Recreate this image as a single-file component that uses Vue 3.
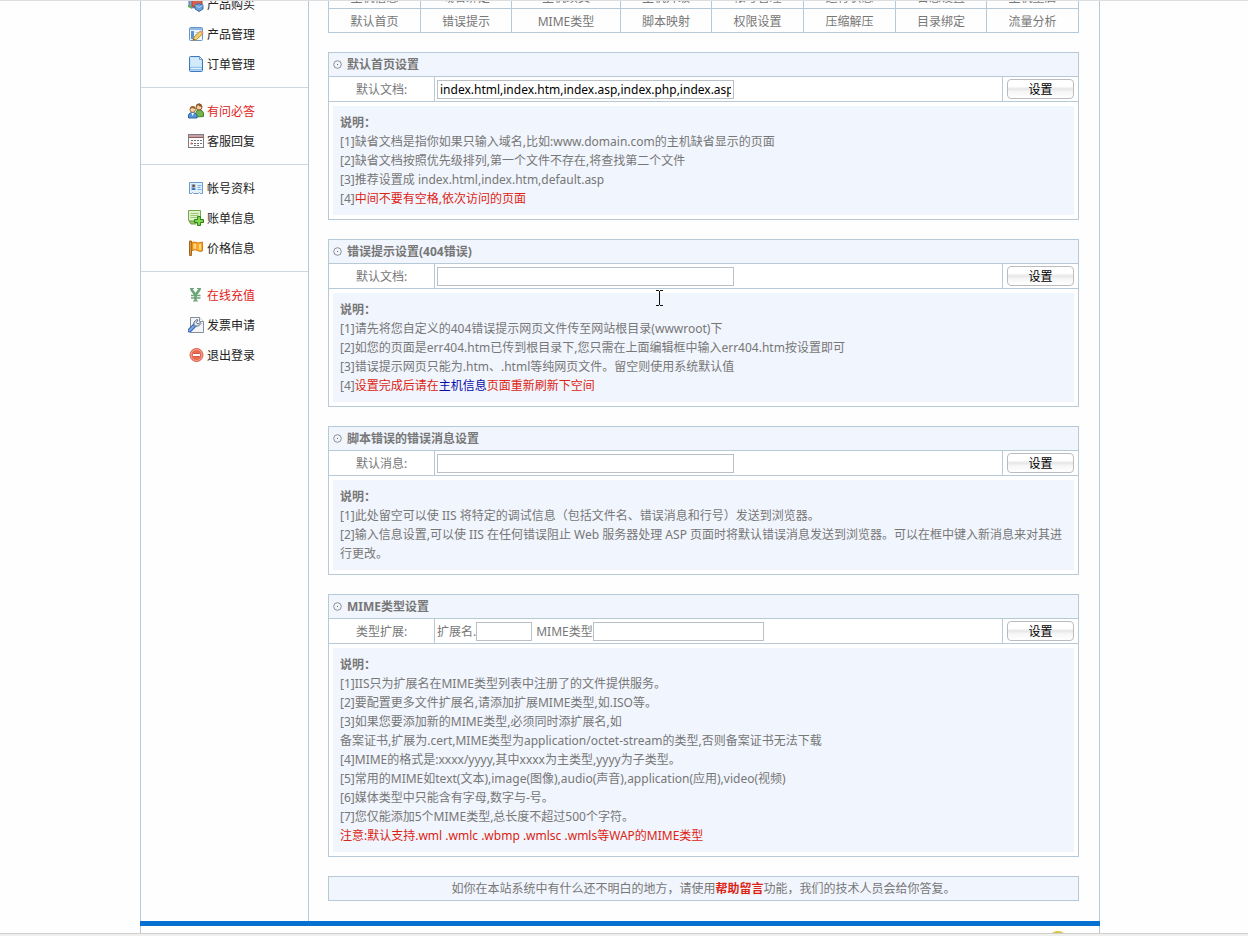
<script setup>
import { ref } from 'vue'

const menu = [
  [
    { label: '产品购买', icon: 'blocks' },
    { label: '产品管理', icon: 'edit' },
    { label: '订单管理', icon: 'page' },
  ],
  [
    { label: '有问必答', icon: 'users', hot: true },
    { label: '客服回复', icon: 'calendar' },
  ],
  [
    { label: '帐号资料', icon: 'card' },
    { label: '账单信息', icon: 'bill' },
    { label: '价格信息', icon: 'flag' },
  ],
  [
    { label: '在线充值', icon: 'yen', hot: true },
    { label: '发票申请', icon: 'wrench' },
    { label: '退出登录', icon: 'exit' },
  ],
]

const tabs = [
  '主机信息', '域名绑定', '主机续费', '主机升级', '帐号管理', '运行状态', '日志设置', '主机重启',
  '默认首页', '错误提示', 'MIME类型', '脚本映射', '权限设置', '压缩解压', '目录绑定', '流量分析',
]

const sections = ref([
  {
    id: 'index',
    title: '默认首页设置',
    label: '默认文档:',
    value: 'index.html,index.htm,index.asp,index.php,index.aspx',
    notes: [
      [{ t: '[1]缺省文档是指你如果只输入域名,比如:www.domain.com的主机缺省显示的页面' }],
      [{ t: '[2]缺省文档按照优先级排列,第一个文件不存在,将查找第二个文件' }],
      [{ t: '[3]推荐设置成 index.html,index.htm,default.asp' }],
      [{ t: '[4]' }, { t: '中间不要有空格,依次访问的页面', c: 'red' }],
    ],
  },
  {
    id: 'error',
    title: '错误提示设置(404错误)',
    label: '默认文档:',
    value: '',
    notes: [
      [{ t: '[1]请先将您自定义的404错误提示网页文件传至网站根目录(wwwroot)下' }],
      [{ t: '[2]如您的页面是err404.htm已传到根目录下,您只需在上面编辑框中输入err404.htm按设置即可' }],
      [{ t: '[3]错误提示网页只能为.htm、.html等纯网页文件。留空则使用系统默认值' }],
      [{ t: '[4]' }, { t: '设置完成后请在', c: 'red' }, { t: '主机信息', c: 'blue', link: true }, { t: '页面重新刷新下空间', c: 'red' }],
    ],
  },
  {
    id: 'script',
    title: '脚本错误的错误消息设置',
    label: '默认消息:',
    value: '',
    notes: [
      [{ t: '[1]此处留空可以使 IIS 将特定的调试信息（包括文件名、错误消息和行号）发送到浏览器。' }],
      [{ t: '[2]输入信息设置,可以使 IIS 在任何错误阻止 Web 服务器处理 ASP 页面时将默认错误消息发送到浏览器。可以在框中键入新消息来对其进行更改。' }],
    ],
  },
  {
    id: 'mime',
    title: 'MIME类型设置',
    label: '类型扩展:',
    mime: true,
    ext: '',
    value: '',
    notes: [
      [{ t: '[1]IIS只为扩展名在MIME类型列表中注册了的文件提供服务。' }],
      [{ t: '[2]要配置更多文件扩展名,请添加扩展MIME类型,如.ISO等。' }],
      [{ t: '[3]如果您要添加新的MIME类型,必须同时添扩展名,如' }],
      [{ t: '备案证书,扩展为.cert,MIME类型为application/octet-stream的类型,否则备案证书无法下载' }],
      [{ t: '[4]MIME的格式是:xxxx/yyyy,其中xxxx为主类型,yyyy为子类型。' }],
      [{ t: '[5]常用的MIME如text(文本),image(图像),audio(声音),application(应用),video(视频)' }],
      [{ t: '[6]媒体类型中只能含有字母,数字与-号。' }],
      [{ t: '[7]您仅能添加5个MIME类型,总长度不超过500个字符。' }],
      [{ t: '注意:默认支持.wml .wmlc .wbmp .wmlsc .wmls等WAP的MIME类型', c: 'red' }],
    ],
  },
])
</script>

<template>
  <div class="window">
    <div class="viewport">
      <div class="page">
        <div class="columns">
          <nav class="sidebar">
            <ul v-for="(group, g) in menu" :key="g" class="group">
              <li v-for="item in group" :key="item.label">
                <a href="#" class="item" :class="{ hot: item.hot }">
                  <svg class="icon" viewBox="0 0 16 16" aria-hidden="true">
                    <g v-if="item.icon === 'blocks'">
                      <path d="M1 5l4-2 4 2v5l-4 2-4-2z" fill="#7fa9d8" stroke="#4d79ac" />
                      <path d="M0 9l4 1v3l-4-2z" fill="#63ad55" />
                      <path d="M4 4l5-3 5 3v6l-5 2-5-2z" fill="#d9604c" stroke="#b23c2c" />
                      <path d="M7 9l4-1.500 4 1.500v4l-4 2.500-4-2.500z" fill="#6c9ed8" stroke="#3f6da8" />
                      <path d="M7.500 9.500l3.500 2 3.500-2" fill="none" stroke="#b5d2f2" />
                    </g>
                    <g v-else-if="item.icon === 'edit'">
                      <rect x="1.500" y="1.500" width="13" height="13" rx="1" fill="#eef5fc" stroke="#6a94c4" />
                      <rect x="2" y="2" width="12" height="2" fill="#8db8e8" />
                      <rect x="3" y="5" width="3" height="8" fill="#5e93d2" />
                      <path d="M7.500 6.500h5M7.500 8.500h4" stroke="#b9cbe0" />
                      <path d="M5 14.500l1-3.500 6.500-6 2.500 2.500-6.500 6z" fill="#f2cf6c" stroke="#b98e35" />
                      <path d="M12 5.500l1-1 2.500 2-1.500 1.500z" fill="#d99a80" />
                      <path d="M5 14.500l.5-2 1.500 1.300z" fill="#4d4a42" />
                    </g>
                    <g v-else-if="item.icon === 'page'">
                      <path d="M1.500 1.500q0-1 1-1h9l3 3v11q0 1-1 1h-11q-1 0-1-1z" fill="#c5e2fa" stroke="#3f7ab8" />
                      <path d="M3 2h8v2h2v6H3z" fill="#d3eafc" />
                      <path d="M11.500 1v2.500H14" fill="#fff" stroke="#6ba0d2" />
                      <path d="M2 11h12v3.500H2z" fill="#94c5ee" />
                      <path d="M3 12.500h10" stroke="#e1f0fc" />
                    </g>
                    <g v-else-if="item.icon === 'users'">
                      <path d="M8 14V9.500Q8 7 11 7q4 0 4.500 3v3.500z" fill="#75b34e" stroke="#47852c" />
                      <circle cx="11" cy="4" r="3" fill="#f2cc9e" stroke="#8e5c2d" />
                      <path d="M8 4Q8 .5 11 .5T14 4q-3-.5-4-2-.5 1.500-2 2z" fill="#8b5828" />
                      <path d="M.5 15v-3Q1 9.500 4.500 9.500T9 12v3z" fill="#5796da" stroke="#2f66aa" />
                      <path d="M3.500 10l1 3 1.500-3z" fill="#fff" />
                      <circle cx="4.700" cy="6.500" r="2.800" fill="#f6d5aa" stroke="#a2733c" />
                      <path d="M2 6q0-3 2.800-3T7.500 6q-3-.3-3.500-1.200Q3.500 6 2 6z" fill="#9a6830" />
                    </g>
                    <g v-else-if="item.icon === 'calendar'">
                      <rect x=".5" y="1.500" width="15" height="13" fill="#fff" stroke="#7c7c82" />
                      <rect x="1" y="2" width="14" height="3" fill="#c9a3a4" />
                      <path d="M1 4.500h14" stroke="#8e5c60" />
                      <path d="M3 7.500h2m1 0h2m1 0h2m1 0h2M3 10.500h2m1 0h2m1 0h2m1 0h2M6 12.500h2m1 0h2" stroke="#6b6e72" />
                      <path d="M2.500 9.500h2v2h-2z" fill="#d1645f" />
                    </g>
                    <g v-else-if="item.icon === 'card'">
                      <path d="M1.500 2.500h13v11h-2l-1-1-1 1h-5l-1-1-1 1h-2z" fill="#e3f1fd" stroke="#6e9cca" />
                      <rect x="3" y="4" width="5" height="6" fill="#b6d4f0" />
                      <circle cx="5.500" cy="5.800" r="1.500" fill="#765a44" />
                      <path d="M3.500 10q0-2.500 2-2.500t2 2.500z" fill="#4679ac" />
                      <path d="M9.500 5.500h4M9.500 7.500h3M9.500 9.500h4" stroke="#79aad9" />
                    </g>
                    <g v-else-if="item.icon === 'bill'">
                      <path d="M.5.500h12v12H3l-2.500-2z" fill="#e0f0cb" stroke="#77a847" />
                      <path d="M2.500 3.500h8M2.500 5.500h8M2.500 7.500h7" stroke="#9cc675" />
                      <path d="M1 11h7v3H3z" fill="#9dc672" stroke="#669b38" />
                      <path d="M9.500 6.500h3v3h3v3h-3v3h-3v-3h-3v-3h3z" fill="#6fce3c" stroke="#2f8517" />
                      <path d="M11 8v6M8 11h6" stroke="#8fe05c" />
                    </g>
                    <g v-else-if="item.icon === 'flag'">
                      <path d="M1.500 1v14.500h2V1z" fill="#d5953c" stroke="#a8651c" />
                      <path d="M4 2.500q2-1 4 0t6.500-.5v9q-3 1-5-.5t-5.500 0z" fill="#f9a82c" stroke="#d67c13" />
                      <path d="M5.500 4q1.500-.5 2.500 0v5q-1-.5-2.500 0zM11 4h2v6h-2z" fill="#fdd680" />
                    </g>
                    <g v-else-if="item.icon === 'yen'" fill="none" stroke="#6ca478">
                      <path d="M3 2l4.500 6L12 2M7.500 7.500V14" stroke-width="2.600" />
                      <path d="M2 1.500h4M9 1.500h4M5 14h5" />
                      <path d="M3 8.500h9.500M3 11h9.500" stroke-width="1.500" />
                    </g>
                    <g v-else-if="item.icon === 'wrench'">
                      <path d="M2.500.5h9l4 4v11h-13z" fill="#f3f5f9" stroke="#868d9c" />
                      <path d="M11.500.5v4h4" fill="#fff" stroke="#868d9c" />
                      <path d="M1.500 13.500L7 8" fill="none" stroke="#2f63ae" stroke-width="4" stroke-linecap="round" />
                      <path d="M1.500 13.500L7 8" fill="none" stroke="#7eaaea" stroke-width="2" stroke-linecap="round" />
                      <path d="M6 9V5l3-2.500 1 .5-1.500 2.500 1.500 1.500 2.500-1.500.5 1L10.500 9z" fill="#dfe6ef" stroke="#5c6f8d" />
                    </g>
                    <g v-else>
                      <circle cx="8.500" cy="8" r="6.500" fill="#ec6a52" stroke="#d9604e" />
                      <circle cx="8.500" cy="8" r="5.500" fill="none" stroke="#f6a592" />
                      <rect x="4.500" y="6.500" width="8" height="3" rx="1" fill="#fff" stroke="#d45744" />
                    </g>
                  </svg>
                  <span>{{ item.label }}</span>
                </a>
              </li>
            </ul>
          </nav>

          <main class="main">
            <nav class="tabs">
              <a v-for="tab in tabs" :key="tab" href="#">{{ tab }}</a>
            </nav>

            <form v-for="s in sections" :key="s.id" class="section" @submit.prevent>
              <h2 class="title">
                <svg class="bullet" viewBox="0 0 9 9" aria-hidden="true">
                  <circle cx="4.500" cy="4.500" r="3.800" fill="none" stroke="#777" stroke-width=".8" />
                  <rect x="4" y="4" width="1" height="1" fill="#666" />
                </svg>
                {{ s.title }}
              </h2>
              <div class="row">
                <label class="label" :for="s.id">{{ s.label }}</label>
                <div class="field">
                  <template v-if="s.mime">
                    <label for="ext">扩展名.</label>
                    <input id="ext" v-model="s.ext" class="short" type="text">
                    <label :for="s.id" class="second">MIME类型</label>
                    <input :id="s.id" v-model="s.value" class="medium" type="text">
                  </template>
                  <input v-else :id="s.id" v-model="s.value" class="long" type="text">
                </div>
                <div class="action"><button type="submit">设置</button></div>
              </div>
              <div class="notes">
                <strong>说明：</strong>
                <p v-for="(line, n) in s.notes" :key="n">
                  <component :is="part.link ? 'a' : 'span'" v-for="(part, p) in line" :key="p" :href="part.link ? '#' : null" :class="part.c">{{ part.t }}</component>
                </p>
              </div>
            </form>

            <p class="help">如你在本站系统中有什么还不明白的地方，请使用<a href="#">帮助留言</a>功能，我们的技术人员会给你答复。</p>
          </main>
        </div>
        <footer class="footer">
          <svg class="badge" viewBox="0 0 20 20" aria-hidden="true">
            <circle cx="10" cy="10" r="10" fill="#d9c53c" />
            <circle cx="10" cy="10" r="6" fill="#f1e27c" />
          </svg>
        </footer>
      </div>
    </div>
    <svg class="cursor" viewBox="0 0 7 16" aria-hidden="true">
      <path d="M0 .5h3M4 .5h3M3.500 1v14M0 15.500h3M4 15.500h3" fill="none" stroke="#111" />
    </svg>
  </div>
</template>

<style>
body {
  margin: 0;
  background: #fefefe;
}
</style>

<style scoped>
.window {
  position: relative;
  box-sizing: border-box;
  height: 100vh;
  display: flex;
  flex-direction: column;
  overflow: hidden;
  border-top: 1px solid #dedede;
  border-bottom: 2px solid #f1efed;
  font: 12px/19px "Noto Sans", "Noto Sans CJK SC", sans-serif;
  color: #777;
}
.viewport {
  flex: 1;
  overflow: hidden;
  padding-right: 8px;
  border-bottom: 1px solid #cfcfcf;
}
.page {
  max-width: 960px;
  margin: -18px auto 0;
}
.columns {
  display: flex;
  border: solid #b7c8d6;
  border-width: 0 1px;
}
.sidebar {
  flex: 0 0 167px;
  border-right: 1px solid #b7c8d6;
}
.group {
  list-style: none;
  margin: 0;
  padding: 8px 0;
  border-bottom: 1px solid #ccd8e3;
}
.group:first-child {
  padding-top: 6px;
}
.group:last-child {
  border-bottom: 0;
}
.item {
  display: flex;
  align-items: center;
  gap: 3px;
  height: 30px;
  padding-left: 47px;
  color: #222;
  text-decoration: none;
}
.icon {
  width: 16px;
  height: 16px;
}
.item.hot {
  color: #e0231a;
}
.main {
  flex: 1;
  min-width: 0;
  padding: 2px 20px 20px 19px;
}
.tabs {
  display: grid;
  grid-template-columns: 92fr 91fr 109fr 91fr 92fr 92fr 91fr 92fr;
  border-left: 1px solid #b7c8d6;
}
.tabs a {
  height: 24px;
  box-sizing: border-box;
  border: solid #b7c8d6;
  border-width: 0 1px 1px 0;
  line-height: 26px;
  text-align: center;
  color: #777;
  text-decoration: none;
}
.section {
  margin-top: 19px;
  border: 1px solid #b7c8d6;
}
.title {
  display: flex;
  align-items: center;
  gap: 5px;
  height: 23px;
  margin: 0;
  padding-left: 4px;
  background: #f1f5fd;
  font-size: 12px;
}
.bullet {
  width: 9px;
  height: 9px;
}
.row {
  display: flex;
  height: 24px;
  border: solid #b7c8d6;
  border-width: 1px 0;
  background: #fff;
}
.label {
  flex: 0 0 105px;
  line-height: 26px;
  text-align: center;
}
.field {
  flex: 1;
  display: flex;
  align-items: center;
  padding-left: 2px;
  border-left: 1px solid #b7c8d6;
}
input {
  box-sizing: border-box;
  height: 19px;
  margin: 0;
  padding: 0 2px;
  border: 1px solid #b9c0c6;
  background: #fff;
  font: inherit;
  color: #000;
}
.long {
  width: 297px;
}
.short {
  width: 56px;
}
.second {
  margin-left: 4px;
}
.medium {
  width: 171px;
}
.action {
  flex: 0 0 76px;
  display: flex;
  align-items: center;
  padding-left: 4px;
  box-sizing: border-box;
  border-left: 1px solid #b7c8d6;
}
button {
  width: 67px;
  height: 20px;
  padding: 1px 0 0;
  border: 1px solid #b9bdc2;
  border-radius: 4px;
  background: linear-gradient(#fff 0 35%, #e6e6e6 50%, #f6f6f6 65%, #fff);
  font: inherit;
  line-height: 18px;
  color: #000;
}
.notes {
  padding: 7px;
  border: 4px solid #fff;
  background: #f1f5fd;
}
.notes strong {
  display: block;
}
.notes p {
  margin: 0;
}
.red {
  color: #dc2414;
}
.blue {
  color: #0a0aa8;
  text-decoration: none;
}
.help {
  margin: 19px 0 0;
  border: 1px solid #b7c8d6;
  background: #f1f5fd;
  line-height: 23px;
  text-align: center;
}
.help a {
  color: #dc2414;
  font-weight: bold;
  text-decoration: none;
}
.footer {
  position: relative;
  height: 60px;
  border: solid #b7c8d6;
  border-width: 0 1px;
}
.footer::before {
  content: "";
  display: block;
  height: 5px;
  margin: 0 -1px;
  background: #0570d0;
}
.badge {
  position: absolute;
  top: 10px;
  right: 31px;
  width: 20px;
  height: 20px;
}
.cursor {
  position: absolute;
  left: 656px;
  top: 289px;
  width: 7px;
  height: 16px;
}
</style>
